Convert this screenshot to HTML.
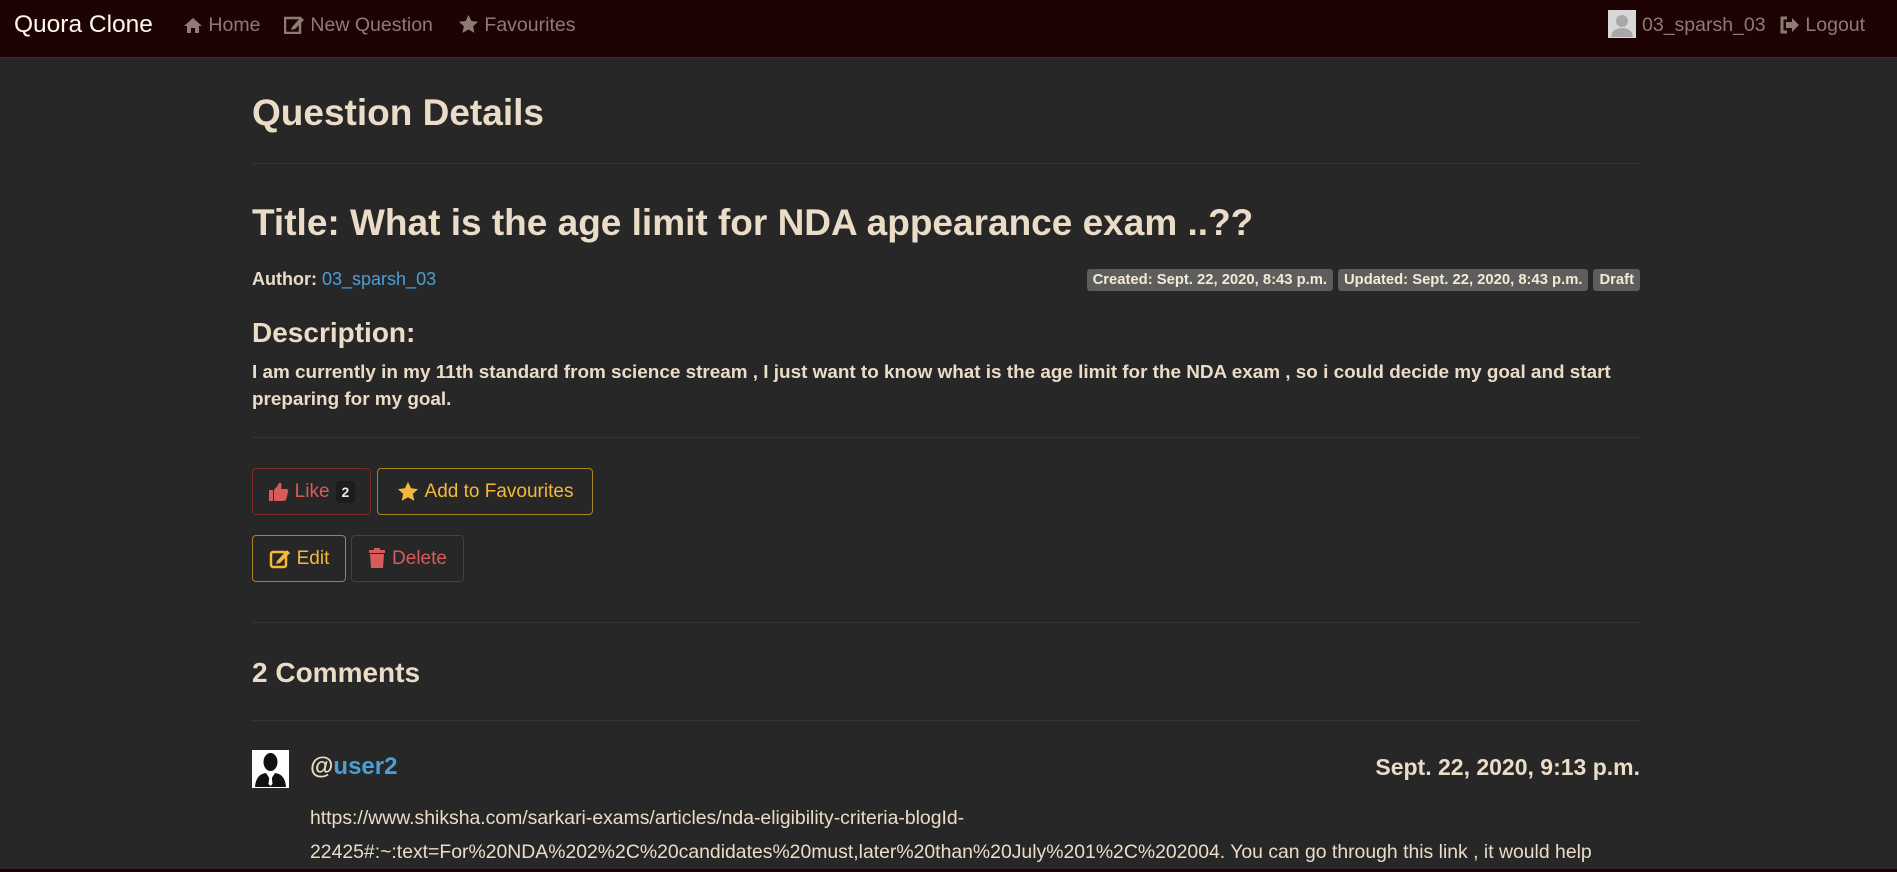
<!DOCTYPE html>
<html style="width:1897px;height:872px;overflow:hidden"><head><meta charset="utf-8"><style>
*{box-sizing:border-box;margin:0;padding:0}
body{width:1897px;height:872px;overflow:hidden;background:#272727;font-family:"Liberation Sans",sans-serif;color:#eadcc6;position:relative}
.nav{position:absolute;left:0;top:0;width:1897px;height:58px;background:#1d0303;border-bottom:1px solid #3a2a2a}
.nav span{position:absolute;top:14px;font-size:19.5px;color:#8c7c72;white-space:nowrap}
.nav svg{vertical-align:-3px}
.a{position:absolute;white-space:nowrap}
.hr{position:absolute;left:252px;width:1388px;height:1px;background:#353535}
.badge{display:inline-block;background:#5d5d5b;color:#f4ead8;font-weight:bold;font-size:14.8px;padding:3px 6px;border-radius:3px;margin-left:5px}
.btn{position:absolute;height:47px;border:1px solid;border-radius:4px;font-size:19px;display:flex;align-items:center;justify-content:center;gap:6px}
.red{border-color:#7a2a2a;color:#d65c5c}
.yel{border-color:#a8861e;color:#f5b83a}
</style></head><body>
<div class="nav">
<span style="left:14px;top:11px;font-size:24.5px;color:#fff8ea">Quora Clone</span>
<span style="left:183px"><svg width="20" height="18" viewBox="0 0 20 18"><path d="M10 2 L1 10 h3 v7 h4 v-5 h4 v5 h4 v-7 h3z" fill="#8c7c72"/></svg> Home</span>
<span style="left:284px"><svg width="21" height="19" viewBox="0 0 21 19"><rect x="1" y="3" width="15" height="15" fill="none" stroke="#8c7c72" stroke-width="2.5"/><path d="M8 12 L17 2 L20 5 L11 14 L7 15z" fill="#8c7c72"/></svg> New Question</span>
<span style="left:458px"><svg width="21" height="20" viewBox="0 0 24 23"><path d="M12 1l3.3 7 7.7.9-5.7 5.2 1.6 7.6L12 17.8 5.1 21.7l1.6-7.6L1 8.9 8.7 8z" fill="#8c7c72"/></svg> Favourites</span>
<span style="left:1608px;top:10px"><svg width="28" height="28" viewBox="0 0 28 28"><rect width="28" height="28" fill="#d8d8d8"/><circle cx="14" cy="11" r="6" fill="#a8a8a8"/><path d="M3 27 Q4 18 14 18 Q24 18 25 27z" fill="#a8a8a8"/></svg></span>
<span style="left:1642px">03_sparsh_03</span>
<span style="left:1779px"><svg width="21" height="18" viewBox="0 0 21 18"><path d="M8 2 H3 v14 h5" fill="none" stroke="#8c7c72" stroke-width="3"/><path d="M7 6 h6 V2 l7 7 -7 7 v-4 H7z" fill="#8c7c72"/></svg> Logout</span>
</div>

<div class="a" style="left:252px;top:92px;font-size:37px;font-weight:bold">Question Details</div>
<div class="hr" style="top:163px"></div>
<div class="a" style="left:252px;top:202px;font-size:37px;font-weight:bold">Title: What is the age limit for NDA appearance exam ..??</div>
<div class="a" style="left:252px;top:269px;font-size:18px"><b>Author:</b> <span style="color:#4a9fd8">03_sparsh_03</span></div>
<div class="a" style="right:257px;top:269px"><span class="badge">Created: Sept. 22, 2020, 8:43 p.m.</span><span class="badge">Updated: Sept. 22, 2020, 8:43 p.m.</span><span class="badge">Draft</span></div>
<div class="a" style="left:252px;top:317px;font-size:28px;font-weight:bold">Description:</div>
<div class="a" style="left:252px;top:359px;font-size:18.9px;font-weight:bold;line-height:27px">I am currently in my 11th standard from science stream , I just want to know what is the age limit for the NDA exam , so i could decide my goal and start<br>preparing for my goal.</div>
<div class="hr" style="top:437px"></div>

<div class="btn red" style="left:252px;top:468px;width:119px"><svg width="21" height="20" viewBox="0 0 21 20"><rect x="1" y="8" width="4" height="11" fill="#d65c5c"/><path d="M6 8 L10 3 Q11 0 13 1 Q14 3 13 7 H19 Q21 8 20 10 L18 18 Q17 19 15 19 H6z" fill="#d65c5c"/></svg>Like <span style="background:#1c1c1c;color:#f0e8d8;font-size:14px;font-weight:bold;padding:3px 6px;border-radius:4px">2</span></div>
<div class="btn yel" style="left:377px;top:468px;width:216px"><svg width="22" height="21" viewBox="0 0 24 23"><path d="M12 1l3.3 7 7.7.9-5.7 5.2 1.6 7.6L12 17.8 5.1 21.7l1.6-7.6L1 8.9 8.7 8z" fill="#f5b83a"/></svg>Add to Favourites</div>
<div class="btn yel" style="left:252px;top:535px;width:94px"><svg width="22" height="21" viewBox="0 0 22 21"><rect x="2" y="4" width="15" height="15" rx="2" fill="none" stroke="#f5b83a" stroke-width="2.5"/><path d="M8 13 L18 2 L21 5 L11 15 L7 16z" fill="#f5b83a"/></svg>Edit</div>
<div class="btn red" style="left:351px;top:535px;width:113px"><svg width="18" height="21" viewBox="0 0 18 21"><rect x="1" y="2" width="16" height="3" fill="#d65c5c"/><rect x="6" y="0" width="6" height="3" fill="#d65c5c"/><path d="M2 6 H16 L15 20 H3z" fill="#d65c5c"/></svg>Delete</div>
<div class="hr" style="top:622px"></div>

<div class="a" style="left:252px;top:657px;font-size:28px;font-weight:bold">2 Comments</div>
<div class="hr" style="top:720px"></div>

<svg class="a" style="left:252px;top:750px" width="37" height="38" viewBox="0 0 37 38"><rect width="37" height="38" fill="#fff"/><ellipse cx="18.5" cy="12" rx="7" ry="9" fill="#111"/><path d="M3 37 Q4 24 14 23 L18.5 30 L23 23 Q33 24 34 37z" fill="#111"/><path d="M17.5 25 h2 l1 9 -2 2 -2-2z" fill="#fff"/></svg>
<div class="a" style="left:310px;top:753px;font-size:24px;font-weight:bold">@<span style="color:#4a9fd8">user2</span></div>
<div class="a" style="right:257px;top:754px;font-size:23px;font-weight:bold">Sept. 22, 2020, 9:13 p.m.</div>
<div class="a" style="left:310px;top:801px;font-size:19.4px;line-height:34px;height:68px;overflow:hidden">https://www.shiksha.com/sarkari-exams/articles/nda-eligibility-criteria-blogId-<br>22425#:~:text=For%20NDA%202%2C%20candidates%20must,later%20than%20July%201%2C%202004. You can go through this link , it would help</div>
<div style="position:absolute;left:0;top:869px;width:1897px;height:3px;background:#1d0303"></div>
</body></html>
